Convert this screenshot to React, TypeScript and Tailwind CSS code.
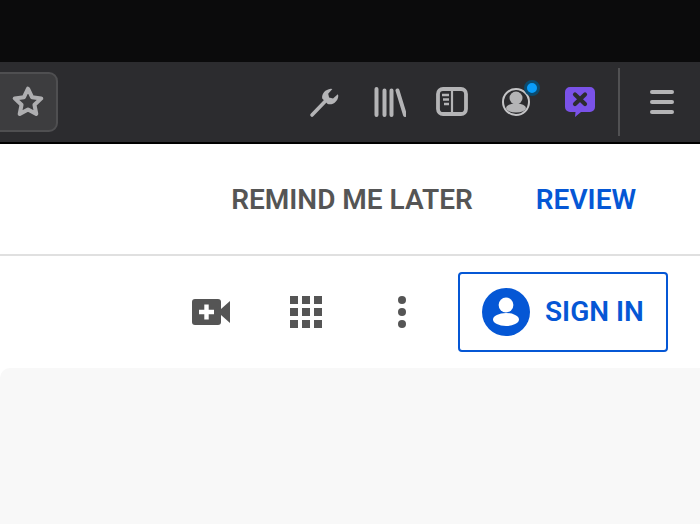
export default function App() {
  return (
    <div className="flex h-[524px] w-[700px] flex-col overflow-hidden bg-white font-['Roboto',sans-serif]">
      {/* Browser chrome */}
      <div className="h-[62px] bg-[#0b0b0c]" />
      <div className="flex h-[80px] items-center bg-[#2c2c2f]">
        <div className="-ml-[8px] flex h-[60px] w-[66px] items-center justify-end rounded-[9px] border-2 border-[#4f4f51] bg-[#3d3d3f] pr-[11px]">
          <svg width="34" height="34" viewBox="0 0 32 32" fill="none" stroke="#aeaeb0" strokeWidth="3.8" strokeLinejoin="round">
            <path d="M16 3.500l3.800 8 8.700 1.100-6.400 6 1.700 8.700-7.800-4.300-7.800 4.300 1.700-8.700-6.400-6 8.700-1.100z" />
          </svg>
        </div>
        <div className="ml-[251px] flex h-full items-center">
          {/* Wrench */}
          <svg width="32" height="32" viewBox="0 0 32 32" fill="none">
            <path d="M3 29L16 15.500" stroke="#b4b4b6" strokeWidth="3.6" strokeLinecap="round" />
            <path d="M13.200 12.500c-.6-4.800 3-9 8.600-9.700l1.600.3-4.200 4.600.9 3.800 3.900 1.100 4.800-4.300.5 1.500c-.2 5.600-5.200 9.600-10.600 8.300z" fill="#b4b4b6" />
          </svg>
          {/* Library */}
          <svg className="ml-[33px]" width="32" height="32" viewBox="0 0 32 32" fill="none" stroke="#b4b4b6" strokeWidth="4" strokeLinecap="round">
            <path d="M2.500 3v26M10.500 4.500v24.500M17.500 4.500v24.500M23.500 4.500l7.500 24.500" />
          </svg>
          {/* Sidebar */}
          <svg className="ml-[30px]" width="32" height="30" viewBox="0 0 32 30" fill="none">
            <rect x="2" y="2" width="28" height="25" rx="5" stroke="#b4b4b6" strokeWidth="3.800" />
            <path d="M16 2v25" stroke="#b4b4b6" strokeWidth="2.200" />
            <path d="M6 8h7M7 12.500h6M8 17h5" stroke="#b4b4b6" strokeWidth="2.400" />
          </svg>
          {/* Account with dot */}
          <div className="relative ml-[32px] h-[32px] w-[32px]">
            <svg width="32" height="32" viewBox="0 0 32 32" fill="none">
              <circle cx="16" cy="16" r="13" stroke="#c4c4c6" strokeWidth="2" />
              <circle cx="16" cy="12" r="6.500" fill="#b4b4b6" />
              <ellipse cx="16" cy="22" rx="10" ry="4.500" fill="#b4b4b6" />
            </svg>
            <span className="absolute -top-[6px] left-[24px] h-[16px] w-[16px] rounded-full border-[3px] border-[#0b4a6e] bg-[#0a9dfa]" />
          </div>
          {/* Purple extension */}
          <svg className="ml-[32px]" width="32" height="32" viewBox="0 0 32 32" fill="none">
            <path d="M6 1h20a5 5 0 0 1 5 5v15a5 5 0 0 1-5 5H17l-6 5 .5-5H6a5 5 0 0 1-5-5V6a5 5 0 0 1 5-5z" fill="#7a52e8" />
            <path d="M11 8.500l10 9.500M21 8.500l-10 9.500" stroke="#2c2c2f" strokeWidth="4.200" strokeLinecap="round" />
          </svg>
          <div className="ml-[22px] h-[68px] w-[2px] bg-[#515153]" />
          {/* Menu */}
          <div className="ml-[30px] flex w-[24px] flex-col gap-[6px]">
            <span className="h-[4px] rounded-full bg-[#b4b4b6]" />
            <span className="h-[4px] rounded-full bg-[#b4b4b6]" />
            <span className="h-[4px] rounded-full bg-[#b4b4b6]" />
          </div>
        </div>
      </div>
      <div className="h-[2px] bg-black" />

      {/* Review banner */}
      <div className="flex h-[110px] items-center justify-end bg-white pr-[64px] pt-[2px] text-[28px] font-semibold leading-none">
        <span className="text-[#555555]">REMIND ME LATER</span>
        <span className="ml-[63px] text-[#0557d5]">REVIEW</span>
      </div>
      <div className="h-[2px] bg-[#e0e0e0]" />

      {/* Site header */}
      <div className="flex h-[112px] items-center justify-end bg-white pr-[32px]">
        <svg width="38" height="26" viewBox="0 0 38 26" fill="none">
          <path d="M3 0h23a3 3 0 0 1 3 3v20a3 3 0 0 1-3 3H3a3 3 0 0 1-3-3V3a3 3 0 0 1 3-3z" fill="#555555" />
          <path d="M29 10l9-8v22l-9-8z" fill="#555555" />
          <path d="M14.500 5.500v15M7 13h15" stroke="#ffffff" strokeWidth="4.400" />
        </svg>
        <div className="ml-[60px] grid grid-cols-3 gap-[4px]">
          {Array.from({ length: 9 }).map((_, i) => (
            <span key={i} className="h-[8px] w-[8px] bg-[#555555]" />
          ))}
        </div>
        <div className="ml-[76px] flex flex-col gap-[4px]">
          <span className="h-[8px] w-[8px] rounded-full bg-[#555555]" />
          <span className="h-[8px] w-[8px] rounded-full bg-[#555555]" />
          <span className="h-[8px] w-[8px] rounded-full bg-[#555555]" />
        </div>
        <div className="ml-[52px] flex h-[80px] w-[210px] items-center rounded-[4px] border-2 border-[#0557d5] pl-[22px]">
          <svg width="48" height="48" viewBox="0 0 48 48">
            <circle cx="24" cy="24" r="24" fill="#0557d5" />
            <circle cx="24" cy="17" r="7.400" fill="#ffffff" />
            <ellipse cx="24" cy="31.500" rx="13" ry="6.500" fill="#ffffff" />
          </svg>
          <span className="ml-[15px] text-[28px] font-semibold leading-none text-[#0557d5]">SIGN IN</span>
        </div>
      </div>

      {/* Page body */}
      <div className="flex-1 rounded-tl-[10px] bg-[#f8f8f8]" />
    </div>
  );
}
